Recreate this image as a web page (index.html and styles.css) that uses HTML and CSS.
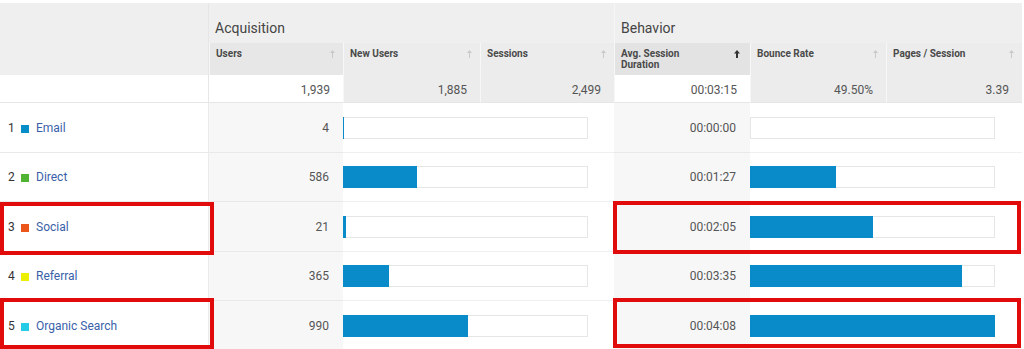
FILE: index.html
```html
<!DOCTYPE html>
<html>
<head>
<meta charset="utf-8">
<title>Channels</title>
<link rel="stylesheet" href="styles.css">
</head>
<body>
<div class="report">
  <div class="table">
    <div class="dim-head"></div>
    <div class="group acq">Acquisition</div>
    <div class="group beh">Behavior</div>

    <div class="colhead hd-dark"><span class="lbl">Users</span><svg class="sort" width="5" height="8" viewBox="0 0 5 8"><path d="M2.5 0L5 3H0Z"/><rect x="2" y="3" width="1" height="5"/></svg></div>
    <div class="colhead hd-cont"><span class="lbl">New Users</span><svg class="sort" width="5" height="8" viewBox="0 0 5 8"><path d="M2.5 0L5 3H0Z"/><rect x="2" y="3" width="1" height="5"/></svg></div>
    <div class="colhead hd-cont"><span class="lbl">Sessions</span><svg class="sort" width="5" height="8" viewBox="0 0 5 8"><path d="M2.5 0L5 3H0Z"/><rect x="2" y="3" width="1" height="5"/></svg></div>
    <div class="colhead hd-sorted"><span class="lbl lbl-wrap">Avg. Session Duration</span><svg class="sort sort-on" width="6" height="8" viewBox="0 0 6 8"><path d="M3 0L6 3.5H0Z"/><rect x="2" y="3" width="2" height="5"/></svg></div>
    <div class="colhead hd-cont"><span class="lbl">Bounce Rate</span><svg class="sort" width="5" height="8" viewBox="0 0 5 8"><path d="M2.5 0L5 3H0Z"/><rect x="2" y="3" width="1" height="5"/></svg></div>
    <div class="colhead hd-cont"><span class="lbl">Pages / Session</span><svg class="sort" width="5" height="8" viewBox="0 0 5 8"><path d="M2.5 0L5 3H0Z"/><rect x="2" y="3" width="1" height="5"/></svg></div>

    <div class="tot tot-dim"></div>
    <div class="tot tot-white tot-first">1,939</div>
    <div class="tot tot-gray">1,885</div>
    <div class="tot tot-gray">2,499</div>
    <div class="tot tot-white">00:03:15</div>
    <div class="tot tot-gray">49.50%</div>
    <div class="tot tot-gray">3.39</div>

    <div class="cell dim"><span class="idx">1</span><span class="sw sw-email"></span><a class="link">Email</a></div>
    <div class="cell num">4</div>
    <div class="cell barcell"><div class="track"><div class="fill" style="width:0.21%"></div></div></div>
    <div class="cell num">00:00:00</div>
    <div class="cell barcell"><div class="track"><div class="fill fill-zero" style="width:0%"></div></div></div>

    <div class="cell dim"><span class="idx">2</span><span class="sw sw-direct"></span><a class="link">Direct</a></div>
    <div class="cell num">586</div>
    <div class="cell barcell"><div class="track"><div class="fill" style="width:30.22%"></div></div></div>
    <div class="cell num">00:01:27</div>
    <div class="cell barcell"><div class="track"><div class="fill" style="width:35.08%"></div></div></div>

    <div class="cell dim"><span class="idx">3</span><span class="sw sw-social"></span><a class="link">Social</a></div>
    <div class="cell num">21</div>
    <div class="cell barcell"><div class="track"><div class="fill" style="width:1.08%"></div></div></div>
    <div class="cell num">00:02:05</div>
    <div class="cell barcell"><div class="track"><div class="fill" style="width:50.4%"></div></div></div>

    <div class="cell dim"><span class="idx">4</span><span class="sw sw-referral"></span><a class="link">Referral</a></div>
    <div class="cell num">365</div>
    <div class="cell barcell"><div class="track"><div class="fill" style="width:18.82%"></div></div></div>
    <div class="cell num">00:03:35</div>
    <div class="cell barcell"><div class="track"><div class="fill" style="width:86.69%"></div></div></div>

    <div class="cell dim"><span class="idx">5</span><span class="sw sw-organic"></span><a class="link">Organic Search</a></div>
    <div class="cell num">990</div>
    <div class="cell barcell"><div class="track"><div class="fill" style="width:51.06%"></div></div></div>
    <div class="cell num">00:04:08</div>
    <div class="cell barcell"><div class="track"><div class="fill" style="width:100%"></div></div></div>
  </div>

  <div class="mark mark-l1"></div>
  <div class="mark mark-l2"></div>
  <div class="mark mark-r1"></div>
  <div class="mark mark-r2"></div>
</div>
</body>
</html>
```

FILE: styles.css
```css
* { box-sizing: border-box; margin: 0; padding: 0; }

html, body {
  background: #ffffff;
  width: 1024px;
  height: 349px;
  overflow: hidden;
}

body {
  font-family: Roboto, "Liberation Sans", Arial, sans-serif;
  color: #555;
}

.report {
  position: relative;
  padding-top: 3px;
  height: 349px;
}

.table {
  display: grid;
  width: 1022px;
  grid-template-columns: 209px 134px 137px 134px 136px 136px 136px;
  grid-template-rows: 40px 32px 28px repeat(5, 49.5px);
}

/* header band */
.dim-head {
  grid-column: 1;
  grid-row: 1 / 3;
  background: #efefef;
  border-right: 1px solid #e6e6e6;
}

.group {
  background: #efefef;
  font-size: 14px;
  line-height: 17px;
  color: #444;
  display: flex;
  align-items: flex-end;
  padding: 0 0 6px 6px;
}
.acq { grid-column: 2 / 5; grid-row: 1; }
.beh { grid-column: 5 / 8; grid-row: 1; border-left: 1px solid #f6f6f6; }

.colhead {
  display: flex;
  justify-content: space-between;
  align-items: flex-start;
  padding: 5px 8px 0 6px;
  border-left: 1px solid #f7f7f7;
}
.lbl {
  font-size: 10px;
  line-height: 11px;
  font-weight: 700;
  color: #4a4a4a;
}
.lbl-wrap { width: 80px; }
.sort {
  margin-top: 2px;
  fill: #c9c9c9;
  flex: none;
}
.sort-on { fill: #333; margin-right: 2px; }

.hd-dark { background: #e7e7e7; }
.hd-cont { background: #ececec; }
.hd-sorted { background: #e3e3e3; }

/* totals row */
.tot {
  display: flex;
  align-items: center;
  justify-content: flex-end;
  padding: 3px 13px 0 0;
  font-size: 12px;
  color: #555;
  border-bottom: 1px solid #e6e6e6;
  border-left: 1px solid #f7f7f7;
}
.tot-dim { background: #fff; border-left: none; border-right: 1px solid #e6e6e6; }
.tot-white { background: #fff; }
.tot-first { border-left: none; }
.tot-gray { background: #ececec; }

/* data rows */
.cell {
  display: flex;
  align-items: center;
  padding-top: 1px;
  border-bottom: 1px solid #e9e9e9;
  font-size: 12px;
}

.dim {
  padding-left: 8px;
  background: #fff;
  border-right: 1px solid #ebebeb;
}
.idx { color: #333; width: 13px; }
.sw {
  width: 8px;
  height: 8px;
  margin: 2px 7px 0 0;
  flex: none;
}
.sw-email { background: #058dc7; }
.sw-direct { background: #50b432; }
.sw-social { background: #ed561b; }
.sw-referral { background: #edef00; }
.sw-organic { background: #24cbe5; }
.link { color: #3a5fa9; text-decoration: none; }

.num {
  background: #f7f7f7;
  justify-content: flex-end;
  padding-right: 14px;
  color: #555;
}

.barcell {
  grid-column: span 2;
  background: #fff;
  border-bottom-color: #f0f0f0;
}
.track {
  width: 245px;
  height: 22px;
  background: #fff;
  box-shadow: inset 0 0 0 1px #e6e6e6;
  display: flex;
}
.fill {
  height: 22px;
  min-width: 1px;
  background: #0a8bc9;
}
.fill-zero { min-width: 0; }

/* annotation boxes */
.mark {
  position: absolute;
  border: 4px solid #e10b0b;
}
.mark-l1 { left: 0; top: 202px; width: 214px; height: 53px; }
.mark-l2 { left: 0; top: 298px; width: 214px; height: 51px; }
.mark-r1 { left: 613px; top: 201px; width: 408px; height: 53px; }
.mark-r2 { left: 613px; top: 298px; width: 408px; height: 50px; }
```
